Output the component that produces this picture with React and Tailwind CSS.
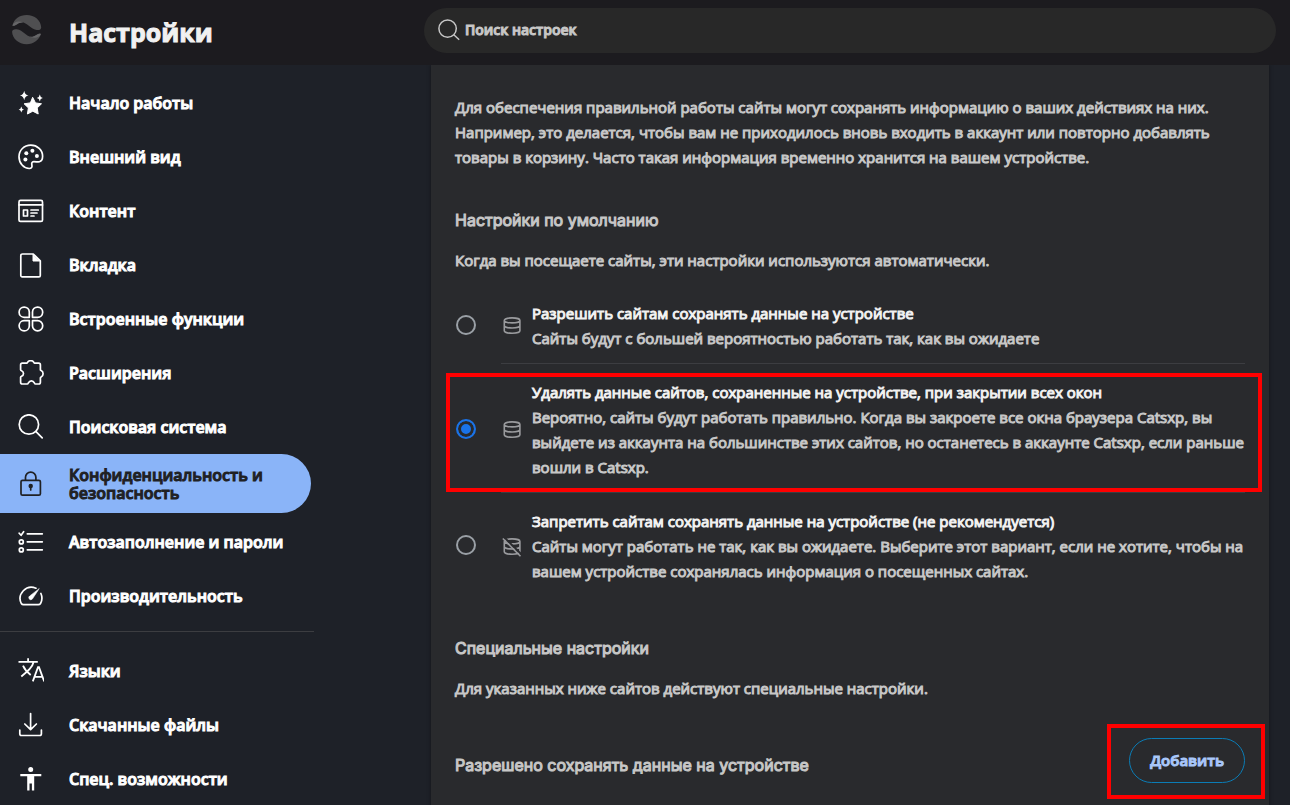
const Icon = ({ children }) => (
  <svg className="size-[26px] shrink-0" viewBox="0 0 26 26" fill="none" stroke="currentColor" strokeWidth="1.7" strokeLinecap="round" strokeLinejoin="round" aria-hidden="true">
    {children}
  </svg>
);

const StartIcon = () => (
  <Icon>
    <path fill="currentColor" strokeWidth="1" d="M14.800 7.600l2.700 5.300 6 .9-4.300 4.100 1 6.100-5.400-2.800-5.400 2.800 1-6.100-4.300-4.100 6-.9z" />
    <path fill="currentColor" stroke="none" d="M6.200.8q.6 4 4.300 4.700-3.700.7-4.300 4.700-.6-4-4.300-4.700Q5.600 4.800 6.200.8zM21.800 4.600q.4 2.900 3 3.400-2.600.5-3 3.400-.4-2.900-3-3.400 2.600-.5 3-3.400zM3.300 16.500q.4 2.500 2.700 3-2.300.5-2.700 3-.4-2.500-2.700-3 2.300-.5 2.700-3z" />
  </Icon>
);

const PaletteIcon = () => (
  <Icon>
    <path d="M12.800 1.200C6 1.200 1 6.200 1 12.700s4.800 11.800 10.300 11.800c2.200 0 3-1.400 2.600-3.200-.4-2-.2-3.700 1.900-3.700 2.500 0 4 .6 5.600.2 2.200-.6 3.200-3 3.200-5.500C24.600 6 19.300 1.200 12.800 1.200z" />
    <g fill="currentColor" stroke="none">
      <circle cx="8.300" cy="9.200" r="2" />
      <circle cx="14.400" cy="6.800" r="2" />
      <circle cx="18.900" cy="11.900" r="2" />
      <circle cx="7.400" cy="15.400" r="2" />
    </g>
  </Icon>
);

const ContentIcon = () => (
  <Icon>
    <rect x="1" y="2.400" width="23.500" height="21" rx="1.500" />
    <path d="M1 6.900h23.500M13 12h7.300M13 15h6M13 18h3" />
    <rect x="5.500" y="12" width="4" height="6" />
  </Icon>
);

const TabIcon = () => (
  <Icon>
    <path d="M4.500 2h10.800l7 6.800v14.700c0 .8-.6 1.400-1.400 1.400H4.200c-.8 0-1.400-.6-1.400-1.400V3.700C2.800 2.700 3.500 2 4.500 2z" />
    <path fill="currentColor" strokeWidth="1" d="M15 2.500v6.500h6.500z" />
  </Icon>
);

const PetalsIcon = () => (
  <Icon>
    <path d="M11.300 11.300H6.100A5.100 5.100 0 1 1 11.300 6zM14.500 11.300V6a5.100 5.100 0 1 1 5.100 5.300zM11.300 14.700v5.200a5.100 5.100 0 1 1-5.200-5.200zM14.500 14.700h5.100a5.100 5.100 0 1 1-5.100 5.200z" />
  </Icon>
);

const PuzzleIcon = () => (
  <Icon>
    <path d="M4.300 3.200h4.500c1 0 .5-2.600 3.900-2.600s2.900 2.600 3.900 2.600h4.100c1.100 0 1.700.7 1.700 1.700v5c0 1 2.700.4 2.700 3.900s-2.700 2.900-2.700 3.900v4.600c0 1.100-.6 1.700-1.700 1.700h-3.300c-1.400 0-.7-3.200-4-3.200s-2.700 3.200-4.100 3.200H4.500c-1.200 0-1.900-.7-1.900-1.800v-4.900c0-1.300 2.900-.8 2.900-3.800s-2.900-2.500-2.900-3.700V4.900c0-1 .7-1.700 1.700-1.700z" />
  </Icon>
);

const SearchIcon = () => (
  <Icon>
    <circle cx="10.900" cy="10.500" r="9.700" />
    <path d="M18 17.600l6.200 6.200" />
  </Icon>
);

const LockIcon = () => (
  <Icon>
    <rect x="3" y="9.300" width="19.400" height="14.900" rx="1.500" />
    <path d="M7.500 9V6.300a5.200 5.200 0 0 1 10.400 0V9" />
    <circle cx="12.700" cy="15" r="1.400" fill="currentColor" />
    <path d="M12.700 15v4" />
  </Icon>
);

const ListIcon = () => (
  <Icon>
    <path d="M9.300 4.800h15M9.300 12.800h15M9.300 20.800h15M1.200 4.200l1.900 2.100 2.500-3.600" />
    <circle cx="3.300" cy="12.900" r="2" />
    <circle cx="3.300" cy="20.900" r="2" />
  </Icon>
);

const GaugeIcon = () => (
  <Icon>
    <path d="M18 5.200A11.300 11.300 0 0 0 3.300 20.500c.5.800 1.300 1.200 2.200 1.200h14.800c.9 0 1.700-.4 2.200-1.200a11.300 11.300 0 0 0 .4-10" />
    <path fill="currentColor" strokeWidth=".6" d="M21 5.900l-6.700 10.200a2 2 0 1 1-2.900-2.800z" />
  </Icon>
);

const TranslateIcon = () => (
  <Icon>
    <path strokeWidth="1.800" strokeLinecap="butt" strokeLinejoin="miter" d="M.5 3.900h19.300M10.100.2v3.700M3.300 18.500C10.500 12.500 14.500 9 15.600 4M5 7.700c1.800 4.300 4.300 6.700 7.700 9.300M14.800 23.400l5.200-14.200h1l5.200 14.200M16.600 18.900h7.800" />
  </Icon>
);

const DownloadIcon = () => (
  <Icon>
    <path d="M12.600 1.500v16M6.800 12l5.800 5.700 5.800-5.700M1.800 18v3.800c0 1 .7 1.700 1.700 1.700h18.200c1 0 1.700-.7 1.700-1.700V18" />
  </Icon>
);

const AccessIcon = () => (
  <Icon>
    <path fill="currentColor" stroke="none" d="M12.700 1a2.500 2.500 0 1 1 0 5 2.500 2.500 0 0 1 0-5zM2.300 8h21v2.200h-7.100V24.500h-2.300v-7h-2.400v7H9.200V10.200H2.300z" />
  </Icon>
);

const DataIcon = ({ off }) => (
  <svg className="size-5 shrink-0 text-[#9a9b9e]" viewBox="0 0 20 20" fill="none" stroke="currentColor" strokeWidth="1.600" aria-hidden="true">
    <path d="M2.300 4.400c0-1.300 3.400-2.500 7.800-2.500s7.800 1.200 7.800 2.500-3.400 2.500-7.800 2.500-7.800-1.200-7.800-2.500zM2.300 4.400v10.300c0 1.300 3.400 2.500 7.800 2.500s7.800-1.200 7.800-2.500V4.400M2.300 9.500c0 1.300 3.400 2.500 7.800 2.500s7.800-1.200 7.800-2.500" />
    {off && (
      <>
        <path stroke="#292a2d" strokeWidth="2" d="M2.500.6l17.200 17" />
        <path d="M.8 1.500l17.700 17.700" />
      </>
    )}
  </svg>
);

const Logo = () => (
  <svg className="size-[30px] shrink-0" viewBox="0 0 30 30" fill="#4f4f51" aria-hidden="true">
    <path d="M.4 10.500C2 4 7.700 0 14.600 0 22.600 0 29 5.500 29.200 12.400c0 2-2 2.900-4.700 2.500C18 14 15.500 7.500 9.500 7.300 5.500 7.200 3.500 12 .4 10.500z" />
    <path d="M28.900 19C27.200 25 21.600 29.200 14.700 29.200 6.700 29.200.3 23.700.1 16.800c0-2 2-2.900 4.700-2.500 6.500.9 9 7.400 15 7.600 4 .1 6-4.700 9.100-2.900z" />
    <path fill="#666668" d="M.4 10.500C2 6.500 6.500 5.400 11.500 7.500 6 6.500 3.500 12 .4 10.500zM28.900 19c-1.600 3.700-6.100 5-11.100 2.700 5.500 1 8-4.200 11.100-2.700z" />
  </svg>
);

const mainNav = [
  { label: 'Начало работы', icon: StartIcon },
  { label: 'Внешний вид', icon: PaletteIcon },
  { label: 'Контент', icon: ContentIcon },
  { label: 'Вкладка', icon: TabIcon },
  { label: 'Встроенные функции', icon: PetalsIcon },
  { label: 'Расширения', icon: PuzzleIcon },
  { label: 'Поисковая система', icon: SearchIcon },
  { label: 'Конфиденциальность и безопасность', icon: LockIcon, active: true },
  { label: 'Автозаполнение и пароли', icon: ListIcon },
  { label: 'Производительность', icon: GaugeIcon },
];

const extraNav = [
  { label: 'Языки', icon: TranslateIcon },
  { label: 'Скачанные файлы', icon: DownloadIcon },
  { label: 'Спец. возможности', icon: AccessIcon },
];

const options = [
  {
    id: 'allow',
    title: 'Разрешить сайтам сохранять данные на устройстве',
    text: 'Сайты будут с большей вероятностью работать так, как вы ожидаете',
  },
  {
    id: 'session',
    title: 'Удалять данные сайтов, сохраненные на устройстве, при закрытии всех окон',
    text: 'Вероятно, сайты будут работать правильно. Когда вы закроете все окна браузера Catsxp, вы выйдете из аккаунта на большинстве этих сайтов, но останетесь в аккаунте Catsxp, если раньше вошли в Catsxp.',
    marked: true,
  },
  {
    id: 'block',
    title: 'Запретить сайтам сохранять данные на устройстве (не рекомендуется)',
    text: 'Сайты могут работать не так, как вы ожидаете. Выберите этот вариант, если не хотите, чтобы на вашем устройстве сохранялась информация о посещенных сайтах.',
    off: true,
  },
];

function NavItem({ item }) {
  const ItemIcon = item.icon;
  return (
    <a
      href="#"
      className={`flex items-center gap-[25px] pl-[18px] text-base leading-[18px] font-semibold ${
        item.active
          ? 'mr-[3px] mb-[2px] h-[59px] rounded-r-full bg-[#8ab4f8] pr-8 text-[#202124]'
          : 'h-[54px] text-white'
      }`}
    >
      <ItemIcon />
      <span>{item.label}</span>
    </a>
  );
}

function Option({ option }) {
  return (
    <div className="relative flex items-center gap-[25px]">
      <input
        type="radio"
        name="site-data"
        id={option.id}
        defaultChecked={option.marked}
        className="ml-px size-5 shrink-0 appearance-none rounded-full border-2 border-[#9aa0a6] checked:border-[#1a73e8] checked:bg-[#1a73e8] checked:shadow-[inset_0_0_0_3px_#292a2d]"
      />
      <label
        htmlFor={option.id}
        className={`flex flex-1 items-center gap-[10px] pt-4 pb-3 pl-px ${option.off ? '' : 'border-b border-[#3c3d41]'}`}
      >
        <DataIcon off={option.off} />
        <span>
          <span className="block text-[#f1f1f1]">{option.title}</span>
          <span className="block">{option.text}</span>
        </span>
      </label>
      {option.marked && (
        <div className="pointer-events-none absolute top-[9px] -right-[17px] bottom-px -left-[9px] border-4 border-[#ff0000]"></div>
      )}
    </div>
  );
}

export default function App() {
  return (
    <div className='flex h-screen flex-col overflow-hidden bg-[#1e2128] font-["Open_Sans","Noto_Sans",sans-serif] text-[15px] leading-[25px] text-[#c7c7c7] [-webkit-text-stroke:1px_currentColor]'>
      <header className="flex h-[65px] shrink-0 items-center bg-[#1c1b1f] pr-[14px] pb-[5px]">
        <div className="flex w-[424px] shrink-0 items-center gap-[27px] pl-3">
          <Logo />
          <h1 className="pt-1 text-[25px] font-bold text-[#f1f1f1]">Настройки</h1>
        </div>
        <label className="flex h-[45px] flex-1 items-center gap-[5px] rounded-full bg-[#282828] pl-[14px]">
          <svg className="size-[22px] shrink-0" viewBox="0 0 22 22" fill="none" stroke="currentColor" strokeWidth="1.500" aria-hidden="true">
            <circle cx="9.600" cy="9.600" r="8.700" />
            <path d="M15.800 15.800l5.400 5" />
          </svg>
          <input type="text" aria-label="Поиск настроек" placeholder="Поиск настроек" className="w-full bg-transparent text-sm font-semibold outline-none placeholder:text-[#c7c7c7]" />
        </label>
      </header>

      <div className="flex min-h-0 flex-1 overflow-hidden">
        <nav className="w-[314px] shrink-0 pt-[11px]">
          {mainNav.map((item) => (
            <NavItem key={item.label} item={item} />
          ))}
          <hr className="mt-2 mb-3 border-[#3c3d41]" />
          {extraNav.map((item) => (
            <NavItem key={item.label} item={item} />
          ))}
        </nav>

        <main className="mr-[21px] ml-[117px] flex-1 self-start bg-[#292a2d] px-6 pt-[30px] pb-8 shadow-[0_0_4px_#00000066]">
          <p>
            Для обеспечения правильной работы сайты могут сохранять информацию о ваших действиях на них. Например, это
            делается, чтобы вам не приходилось вновь входить в аккаунт или повторно добавлять товары в корзину. Часто
            такая информация временно хранится на вашем устройстве.
          </p>

          <h2 className="mt-[38px] font-[Inter] text-base">Настройки по умолчанию</h2>
          <p className="mt-4">Когда вы посещаете сайты, эти настройки используются автоматически.</p>

          <div className="mt-3">
            {options.map((option) => (
              <Option key={option.id} option={option} />
            ))}
          </div>

          <h2 className="mt-10 font-[Inter] text-base">Специальные настройки</h2>
          <p className="mt-4">Для указанных ниже сайтов действуют специальные настройки.</p>

          <div className="mt-[37px] flex items-center justify-between">
            <h2 className="pt-2 font-[Inter] text-base">Разрешено сохранять данные на устройстве</h2>
            <div className="relative">
              <button type="button" className="h-[45px] rounded-full border border-[#0b7cb5] px-5 font-semibold text-[#a8c7fa]">
                Добавить
              </button>
              <div className="pointer-events-none absolute -top-[14px] -right-[20px] -bottom-4 -left-[22px] border-4 border-[#ff0000]"></div>
            </div>
          </div>
        </main>
      </div>
    </div>
  );
}
